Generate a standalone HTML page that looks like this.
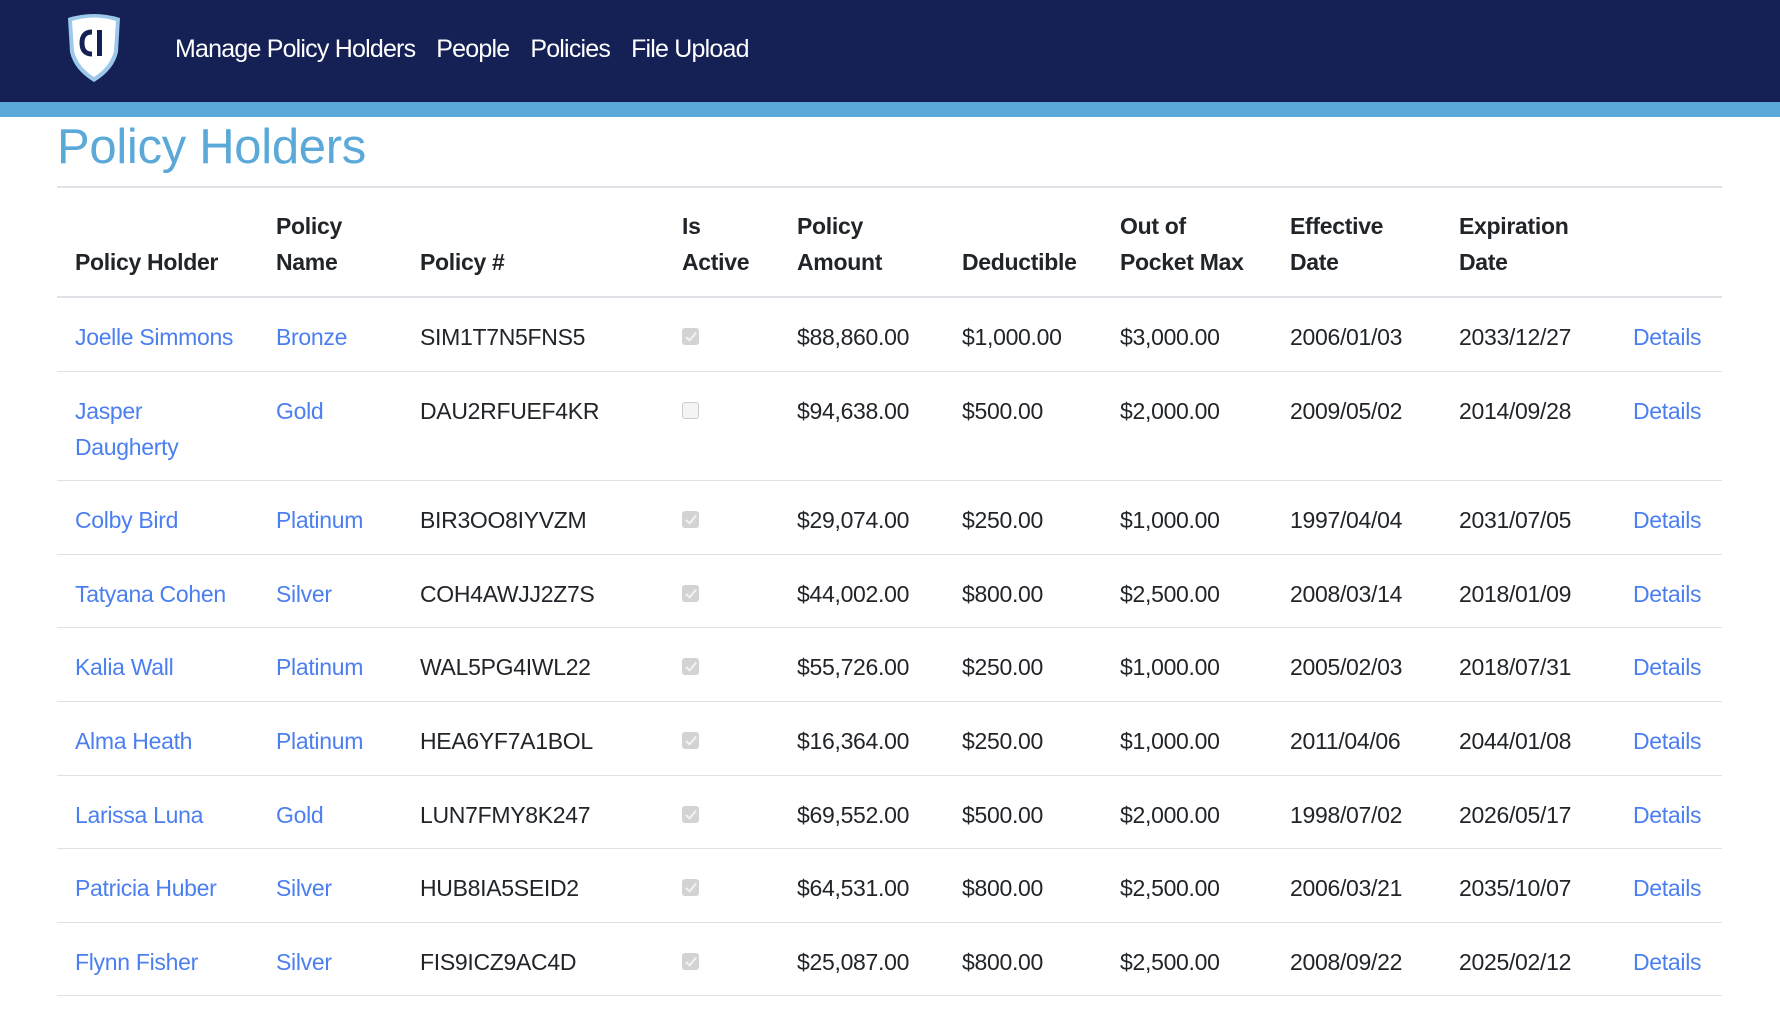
<!DOCTYPE html>
<html><head><meta charset="utf-8"><style>
*{margin:0;padding:0;box-sizing:border-box}
body{width:1780px;height:1012px;overflow:hidden;background:#fff;font-family:"Liberation Sans",sans-serif;color:#212529}
.nav{height:102px;background:#152055;position:relative}
.bar{height:15px;background:#5aa9d8}
.logo{position:absolute;left:64px;top:12px}
.links{position:absolute;left:175px;top:35px;font-size:25px;color:#fff;letter-spacing:-0.8px;white-space:nowrap}
.links span{margin-right:21px}
h1{position:absolute;left:57px;top:119px;font-size:49px;font-weight:normal;color:#5aa9d8;letter-spacing:-0.3px}
.hr{position:absolute;left:57px;top:186px;width:1665px;height:2px;background:#dee2e6}
table{position:absolute;left:57px;top:188px;width:1665px;border-collapse:collapse;table-layout:fixed;font-size:23px;line-height:36px}
th{text-align:left;vertical-align:bottom;font-weight:bold;padding:20px 18px 16px;border-bottom:2px solid #dee2e6;letter-spacing:-0.3px}
td{vertical-align:top;padding:21px 18px 15.6px;border-bottom:1px solid #dee2e6;letter-spacing:-0.3px;white-space:nowrap}
td.w{white-space:normal}
a{color:#4b7ff0;text-decoration:none}
.cb{display:inline-block;width:17px;height:17px;border-radius:3px;background:#d3d3d3;margin-top:7px;position:relative}
.cb.off{background:#f4f4f4;border:1px solid #ccc}
.cb:not(.off)::after{content:"";position:absolute;left:6px;top:2px;width:4px;height:9px;border:solid #f2f2f2;border-width:0 2px 2px 0;transform:rotate(40deg)}
</style></head><body>
<div class="nav">
<svg class="logo" width="60" height="72" viewBox="0 0 60 72">
<path d="M4 6 Q30 -2 56 6 L54 40 Q50 58 30 70 Q10 58 6 40 Z" fill="#9cc9ea"/>
<path d="M8 9 Q30 2 52 9 L50 39 Q46 55 30 65 Q14 55 10 39 Z" fill="#fff"/>
<path d="M28 20 Q18 20 18 31 Q18 42 28 42" fill="none" stroke="#152055" stroke-width="5"/>
<rect x="33" y="18" width="5" height="26" fill="#152055"/>
</svg>
<div class="links"><span>Manage Policy Holders</span><span>People</span><span>Policies</span><span>File Upload</span></div>
</div>
<div class="bar"></div>
<h1>Policy Holders</h1>
<div class="hr"></div>
<table>
<colgroup><col style="width:201px"><col style="width:144px"><col style="width:262px"><col style="width:115px"><col style="width:165px"><col style="width:158px"><col style="width:170px"><col style="width:169px"><col style="width:174px"><col style="width:107px"></colgroup>
<tr><th>Policy Holder</th><th>Policy Name</th><th>Policy #</th><th>Is Active</th><th>Policy Amount</th><th>Deductible</th><th>Out of Pocket Max</th><th>Effective Date</th><th>Expiration Date</th><th></th></tr>
<tr><td><a>Joelle Simmons</a></td><td><a>Bronze</a></td><td>SIM1T7N5FNS5</td><td><span class="cb"></span></td><td>$88,860.00</td><td>$1,000.00</td><td>$3,000.00</td><td>2006/01/03</td><td>2033/12/27</td><td><a>Details</a></td></tr>
<tr><td class="w"><a>Jasper Daugherty</a></td><td><a>Gold</a></td><td>DAU2RFUEF4KR</td><td><span class="cb off"></span></td><td>$94,638.00</td><td>$500.00</td><td>$2,000.00</td><td>2009/05/02</td><td>2014/09/28</td><td><a>Details</a></td></tr>
<tr><td><a>Colby Bird</a></td><td><a>Platinum</a></td><td>BIR3OO8IYVZM</td><td><span class="cb"></span></td><td>$29,074.00</td><td>$250.00</td><td>$1,000.00</td><td>1997/04/04</td><td>2031/07/05</td><td><a>Details</a></td></tr>
<tr><td><a>Tatyana Cohen</a></td><td><a>Silver</a></td><td>COH4AWJJ2Z7S</td><td><span class="cb"></span></td><td>$44,002.00</td><td>$800.00</td><td>$2,500.00</td><td>2008/03/14</td><td>2018/01/09</td><td><a>Details</a></td></tr>
<tr><td><a>Kalia Wall</a></td><td><a>Platinum</a></td><td>WAL5PG4IWL22</td><td><span class="cb"></span></td><td>$55,726.00</td><td>$250.00</td><td>$1,000.00</td><td>2005/02/03</td><td>2018/07/31</td><td><a>Details</a></td></tr>
<tr><td><a>Alma Heath</a></td><td><a>Platinum</a></td><td>HEA6YF7A1BOL</td><td><span class="cb"></span></td><td>$16,364.00</td><td>$250.00</td><td>$1,000.00</td><td>2011/04/06</td><td>2044/01/08</td><td><a>Details</a></td></tr>
<tr><td><a>Larissa Luna</a></td><td><a>Gold</a></td><td>LUN7FMY8K247</td><td><span class="cb"></span></td><td>$69,552.00</td><td>$500.00</td><td>$2,000.00</td><td>1998/07/02</td><td>2026/05/17</td><td><a>Details</a></td></tr>
<tr><td><a>Patricia Huber</a></td><td><a>Silver</a></td><td>HUB8IA5SEID2</td><td><span class="cb"></span></td><td>$64,531.00</td><td>$800.00</td><td>$2,500.00</td><td>2006/03/21</td><td>2035/10/07</td><td><a>Details</a></td></tr>
<tr><td><a>Flynn Fisher</a></td><td><a>Silver</a></td><td>FIS9ICZ9AC4D</td><td><span class="cb"></span></td><td>$25,087.00</td><td>$800.00</td><td>$2,500.00</td><td>2008/09/22</td><td>2025/02/12</td><td><a>Details</a></td></tr>
</table>
</body></html>
